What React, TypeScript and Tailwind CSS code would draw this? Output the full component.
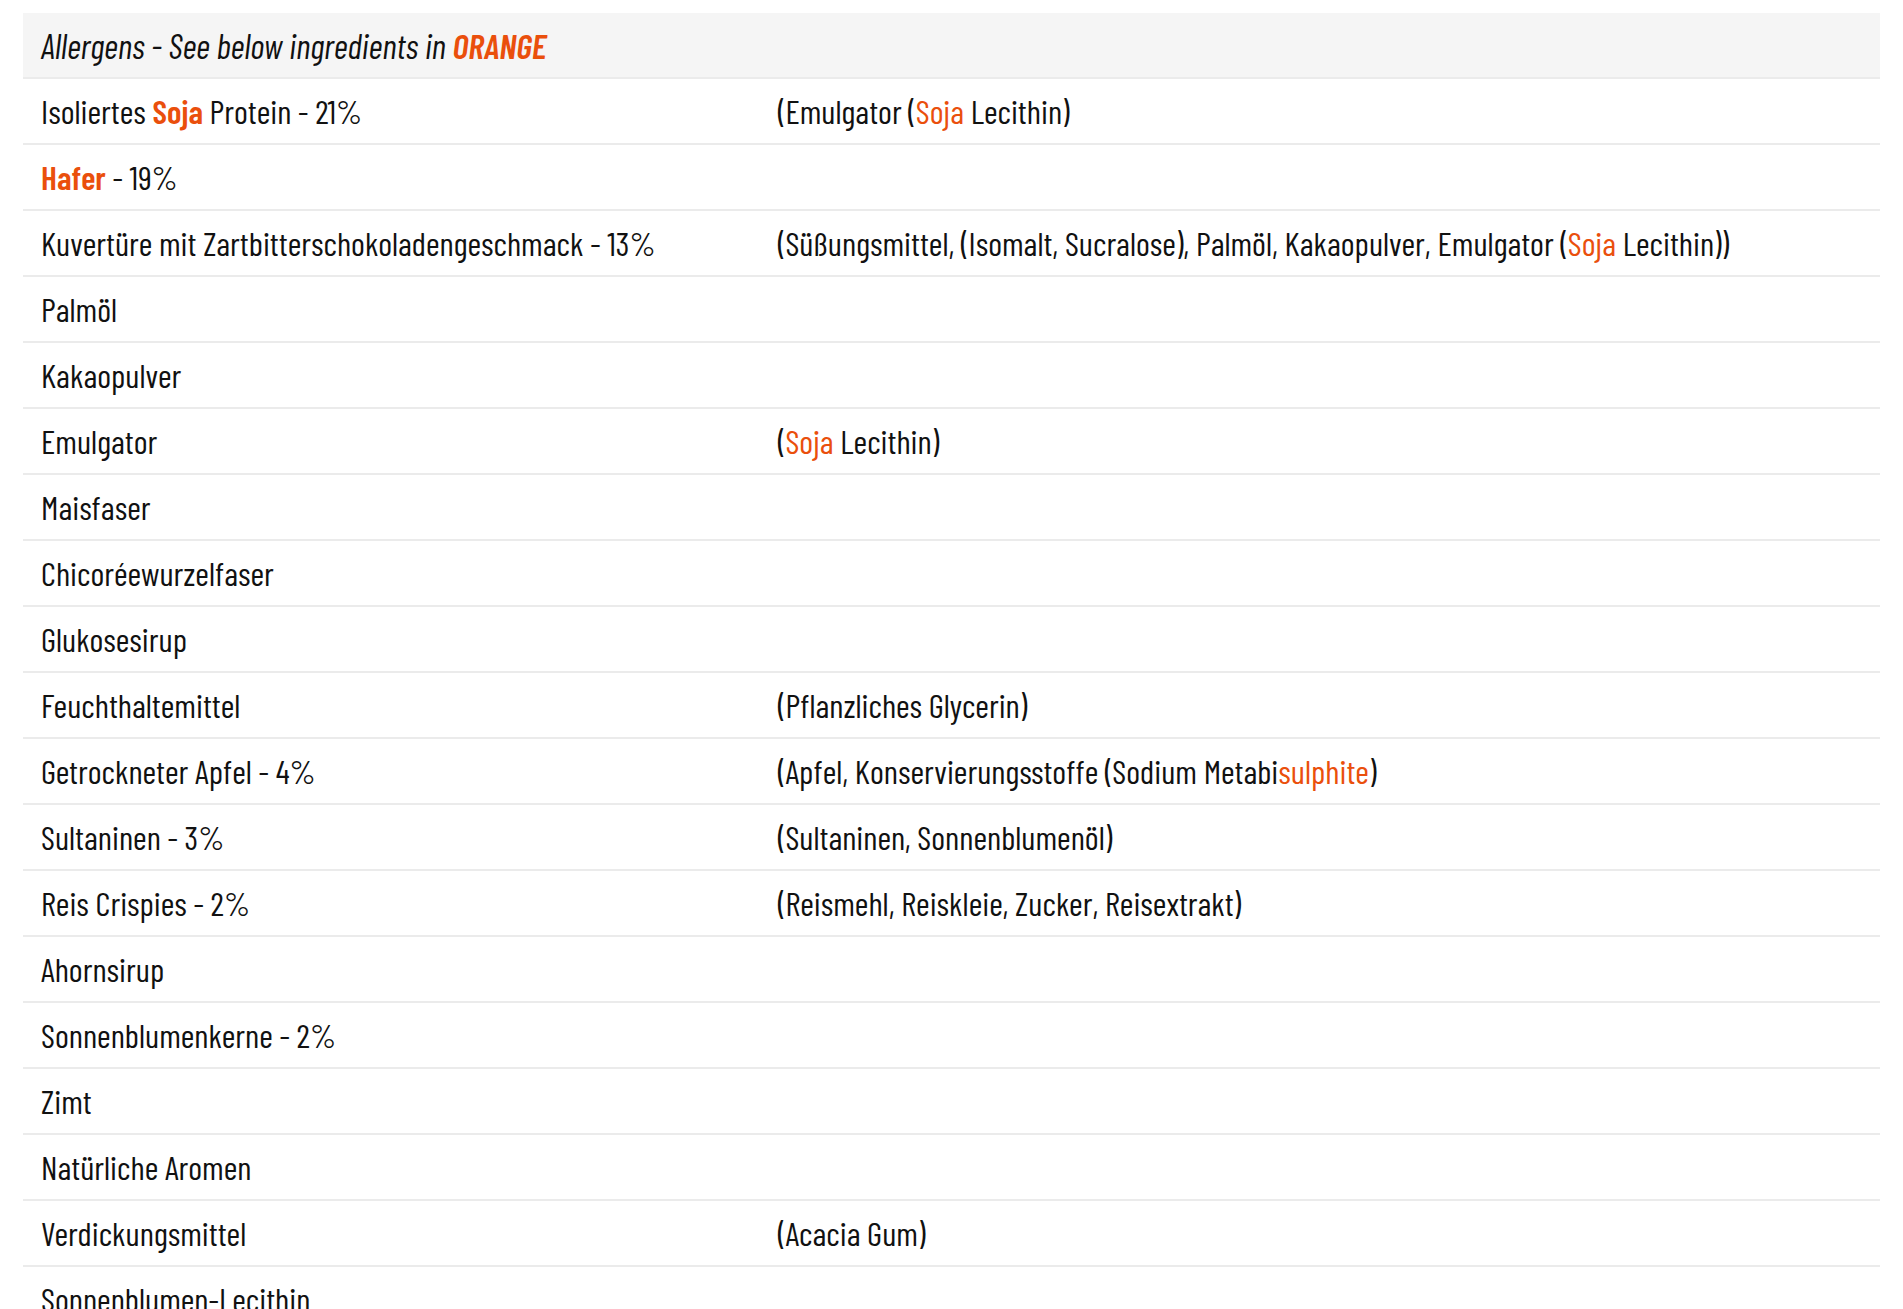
import React from "react";

type Part = string | { o: string; b?: boolean };

const rows: { name: Part[]; info?: Part[] }[] = [
  { name: ["Isoliertes ", { o: "Soja", b: true }, " Protein - 21%"], info: ["(Emulgator (", { o: "Soja" }, " Lecithin)"] },
  { name: [{ o: "Hafer", b: true }, " - 19%"] },
  {
    name: ["Kuvertüre mit Zartbitterschokoladengeschmack - 13%"],
    info: ["(Süßungsmittel, (Isomalt, Sucralose), Palmöl, Kakaopulver, Emulgator (", { o: "Soja" }, " Lecithin))"],
  },
  { name: ["Palmöl"] },
  { name: ["Kakaopulver"] },
  { name: ["Emulgator"], info: ["(", { o: "Soja" }, " Lecithin)"] },
  { name: ["Maisfaser"] },
  { name: ["Chicoréewurzelfaser"] },
  { name: ["Glukosesirup"] },
  { name: ["Feuchthaltemittel"], info: ["(Pflanzliches Glycerin)"] },
  { name: ["Getrockneter Apfel - 4%"], info: ["(Apfel, Konservierungsstoffe (Sodium Metabi", { o: "sulphite" }, ")"] },
  { name: ["Sultaninen - 3%"], info: ["(Sultaninen, Sonnenblumenöl)"] },
  { name: ["Reis Crispies - 2%"], info: ["(Reismehl, Reiskleie, Zucker, Reisextrakt)"] },
  { name: ["Ahornsirup"] },
  { name: ["Sonnenblumenkerne - 2%"] },
  { name: ["Zimt"] },
  { name: ["Natürliche Aromen"] },
  { name: ["Verdickungsmittel"], info: ["(Acacia Gum)"] },
  { name: ["Sonnenblumen-Lecithin"] },
  { name: ["Salz"] },
];

function Text({ parts }: { parts: Part[] }) {
  return (
    <>
      {parts.map((p, i) =>
        typeof p === "string" ? (
          <span key={i}>{p}</span>
        ) : (
          <span key={i} className={p.b ? "font-semibold text-[#ea4f0c]" : "text-[#ea4f0c]"}>
            {p.o}
          </span>
        )
      )}
    </>
  );
}

export default function App() {
  return (
    <div className="min-h-screen bg-white px-[23px] pt-[13px] text-[#111] [font-family:'Barlow_Condensed','Roboto_Condensed',sans-serif]">
      <div className="text-[33.4px] leading-none">
        <div className="flex h-[66px] items-center border-b-2 border-[#ebebeb] bg-[#f5f5f5] px-[18px] text-[34.6px] italic">
          <span>
            Allergens - See below ingredients in <span className="font-semibold text-[#ea4f0c]">ORANGE</span>
          </span>
        </div>
        {rows.map((r, i) => (
          <div key={i} className="grid h-[66px] grid-cols-[755px_1fr] items-center border-b-2 border-[#ebebeb] pt-[2px]">
            <div className="whitespace-nowrap pl-[18px]">
              <Text parts={r.name} />
            </div>
            <div className="whitespace-nowrap">{r.info && <Text parts={r.info} />}</div>
          </div>
        ))}
      </div>
    </div>
  );
}
